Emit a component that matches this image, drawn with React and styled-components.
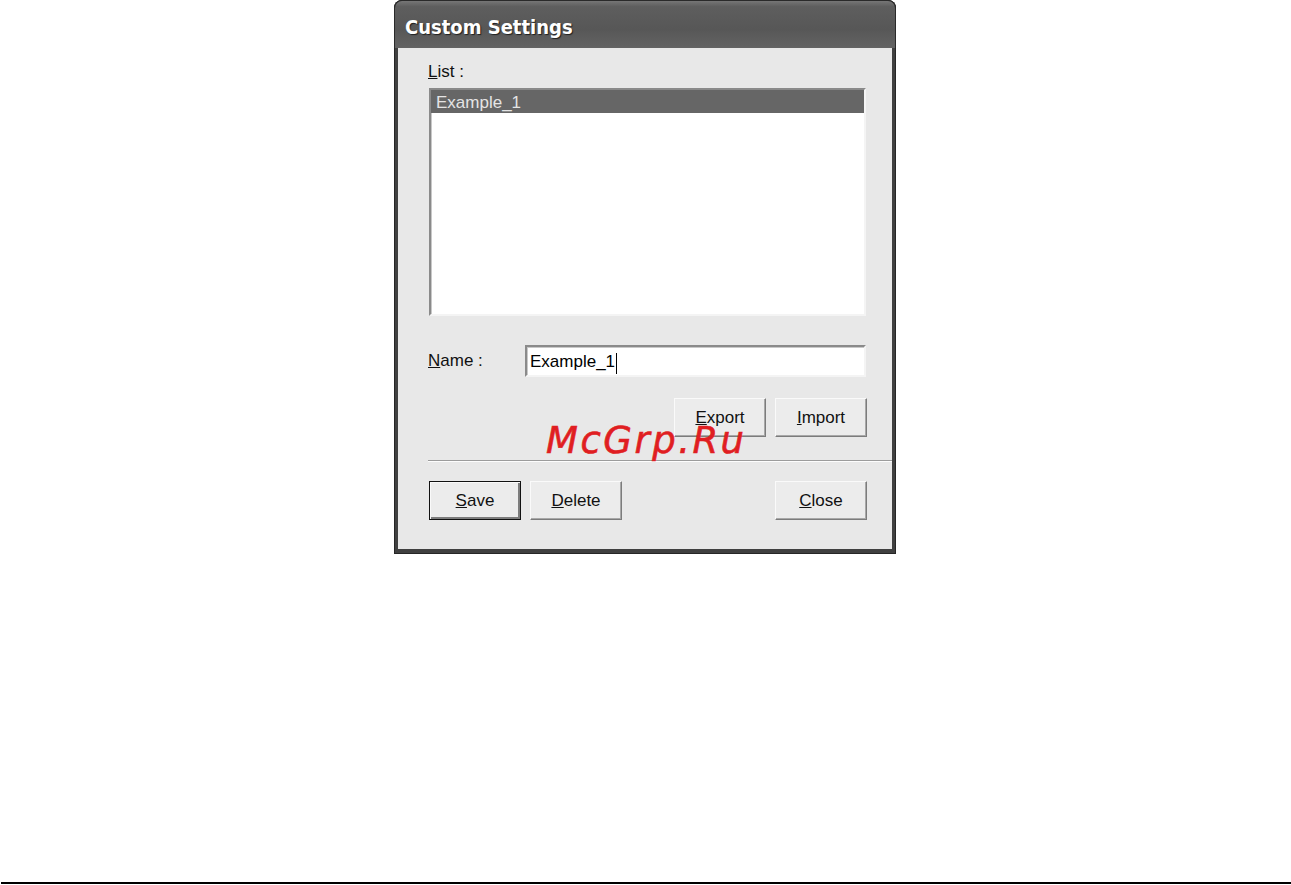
import styled, { createGlobalStyle } from 'styled-components';

const GlobalStyle = createGlobalStyle`
  html, body {
    margin: 0;
    padding: 0;
    background: #ffffff;
  }
  * {
    box-sizing: border-box;
  }
`;

const Page = styled.div`
  position: relative;
  width: 1291px;
  height: 885px;
  display: flex;
  flex-direction: column;
  font-family: 'Liberation Sans', Arial, sans-serif;
  font-size: 17px;
  color: #000;
`;

const Frame = styled.div`
  margin-left: 394px;
  width: 502px;
  height: 554px;
  display: flex;
  flex-direction: column;
  background: #404040;
  border-radius: 8px 8px 0 0;
  padding: 0 4px 5px 4px;
  box-shadow: inset 0 0 0 1px #262626;
`;

const TitleBar = styled.div`
  margin: 0 -4px;
  height: 48px;
  padding: 14px 0 0 10px;
  border-radius: 8px 8px 0 0;
  background: linear-gradient(#767676 0%, #5e5e5e 12%, #575757 60%, #636363 100%);
  border: 1px solid #2a2a2a;
  border-bottom: none;
  font-family: 'DejaVu Sans Condensed', 'DejaVu Sans', sans-serif;
  font-weight: bold;
  font-size: 20px;
  line-height: 24px;
  color: #ffffff;
  text-shadow: 1px 1px 1px #202020;
`;

const Client = styled.div`
  flex: 1;
  display: flex;
  flex-direction: column;
  background: #e8e8e8;
  padding: 14px 26px 29px 30px;
  line-height: 20px;
`;

const Label = styled.div`
  height: 20px;
  color: #111;
`;

const ListBox = styled.div`
  margin: 6px 0 0 1px;
  height: 228px;
  background: #ffffff;
  border: 2px solid;
  border-color: #8a8a8a #f4f4f4 #f4f4f4 #8a8a8a;
  box-shadow: inset 1px 1px 0 #c8c8c8;
`;

const ListItem = styled.div`
  height: 23px;
  padding: 4px 0 0 5px;
  line-height: 18px;
  background: ${(p) => (p.$selected ? '#666666' : 'transparent')};
  color: ${(p) => (p.$selected ? '#e4e4e4' : '#000')};
`;

const NameRow = styled.div`
  margin-top: 29px;
  display: grid;
  grid-template-columns: 97px 1fr;
  align-items: center;
`;

const TextInput = styled.div`
  height: 32px;
  background: #ffffff;
  border: 2px solid;
  border-color: #8a8a8a #f4f4f4 #f4f4f4 #8a8a8a;
  box-shadow: inset 1px 1px 0 #c8c8c8;
  padding: 5px 3px 0;
  line-height: 20px;
  display: flex;
  align-items: flex-start;
`;

const Caret = styled.span`
  display: inline-block;
  width: 1px;
  height: 21px;
  margin: 1px 0 0 1px;
  background: #000;
`;

const ButtonRow = styled.div`
  display: flex;
  gap: 9px;
  margin-top: ${(p) => p.$top}px;
  justify-content: ${(p) => (p.$end ? 'flex-end' : 'flex-start')};
  margin-right: -1px;
  margin-left: ${(p) => (p.$end ? 0 : 1)}px;
`;

const Spacer = styled.div`
  flex: 1;
`;

const Button = styled.button`
  width: 92px;
  height: 39px;
  padding: 0;
  font-family: inherit;
  font-size: 17px;
  line-height: 20px;
  color: #111;
  background: #ececec;
  border: 1px solid;
  border-color: ${(p) => (p.$default ? '#111' : '#fafafa #7c7c7c #7c7c7c #fafafa')};
  box-shadow: ${(p) =>
    p.$default
      ? 'inset 1px 1px 0 #fafafa, inset -2px -2px 0 #7c7c7c'
      : 'inset -1px -1px 0 #a8a8a8'};
`;

const Separator = styled.div`
  margin: 23px -26px 0 0;
  height: 2px;
  border-top: 1px solid #9c9c9c;
  border-bottom: 1px solid #fdfdfd;
`;

const Watermark = styled.div`
  position: absolute;
  left: 546px;
  top: 422px;
  font-family: 'DejaVu Sans', Verdana, sans-serif;
  font-style: italic;
  font-weight: 500;
  font-size: 37px;
  line-height: 37px;
  letter-spacing: 2.5px;
  color: #e01e22;
  -webkit-text-stroke: 0.6px #e01e22;
  pointer-events: none;
`;

const BottomRule = styled.div`
  margin: auto 0 1px 1px;
  height: 2px;
  background: #000;
`;

const Key = ({ children }) => <u>{children}</u>;

export default function App() {
  return (
    <>
      <GlobalStyle />
      <Page>
        <Frame>
          <TitleBar>Custom Settings</TitleBar>
          <Client>
            <Label>
              <Key>L</Key>ist :
            </Label>
            <ListBox>
              <ListItem $selected>Example_1</ListItem>
            </ListBox>
            <NameRow>
              <Label>
                <Key>N</Key>ame :
              </Label>
              <TextInput>
                Example_1
                <Caret />
              </TextInput>
            </NameRow>
            <ButtonRow $top={21} $end>
              <Button>
                <Key>E</Key>xport
              </Button>
              <Button>
                <Key>I</Key>mport
              </Button>
            </ButtonRow>
            <Separator />
            <ButtonRow $top={19}>
              <Button $default>
                <Key>S</Key>ave
              </Button>
              <Button>
                <Key>D</Key>elete
              </Button>
              <Spacer />
              <Button>
                <Key>C</Key>lose
              </Button>
            </ButtonRow>
          </Client>
        </Frame>
        <Watermark>McGrp.Ru</Watermark>
        <BottomRule />
      </Page>
    </>
  );
}
